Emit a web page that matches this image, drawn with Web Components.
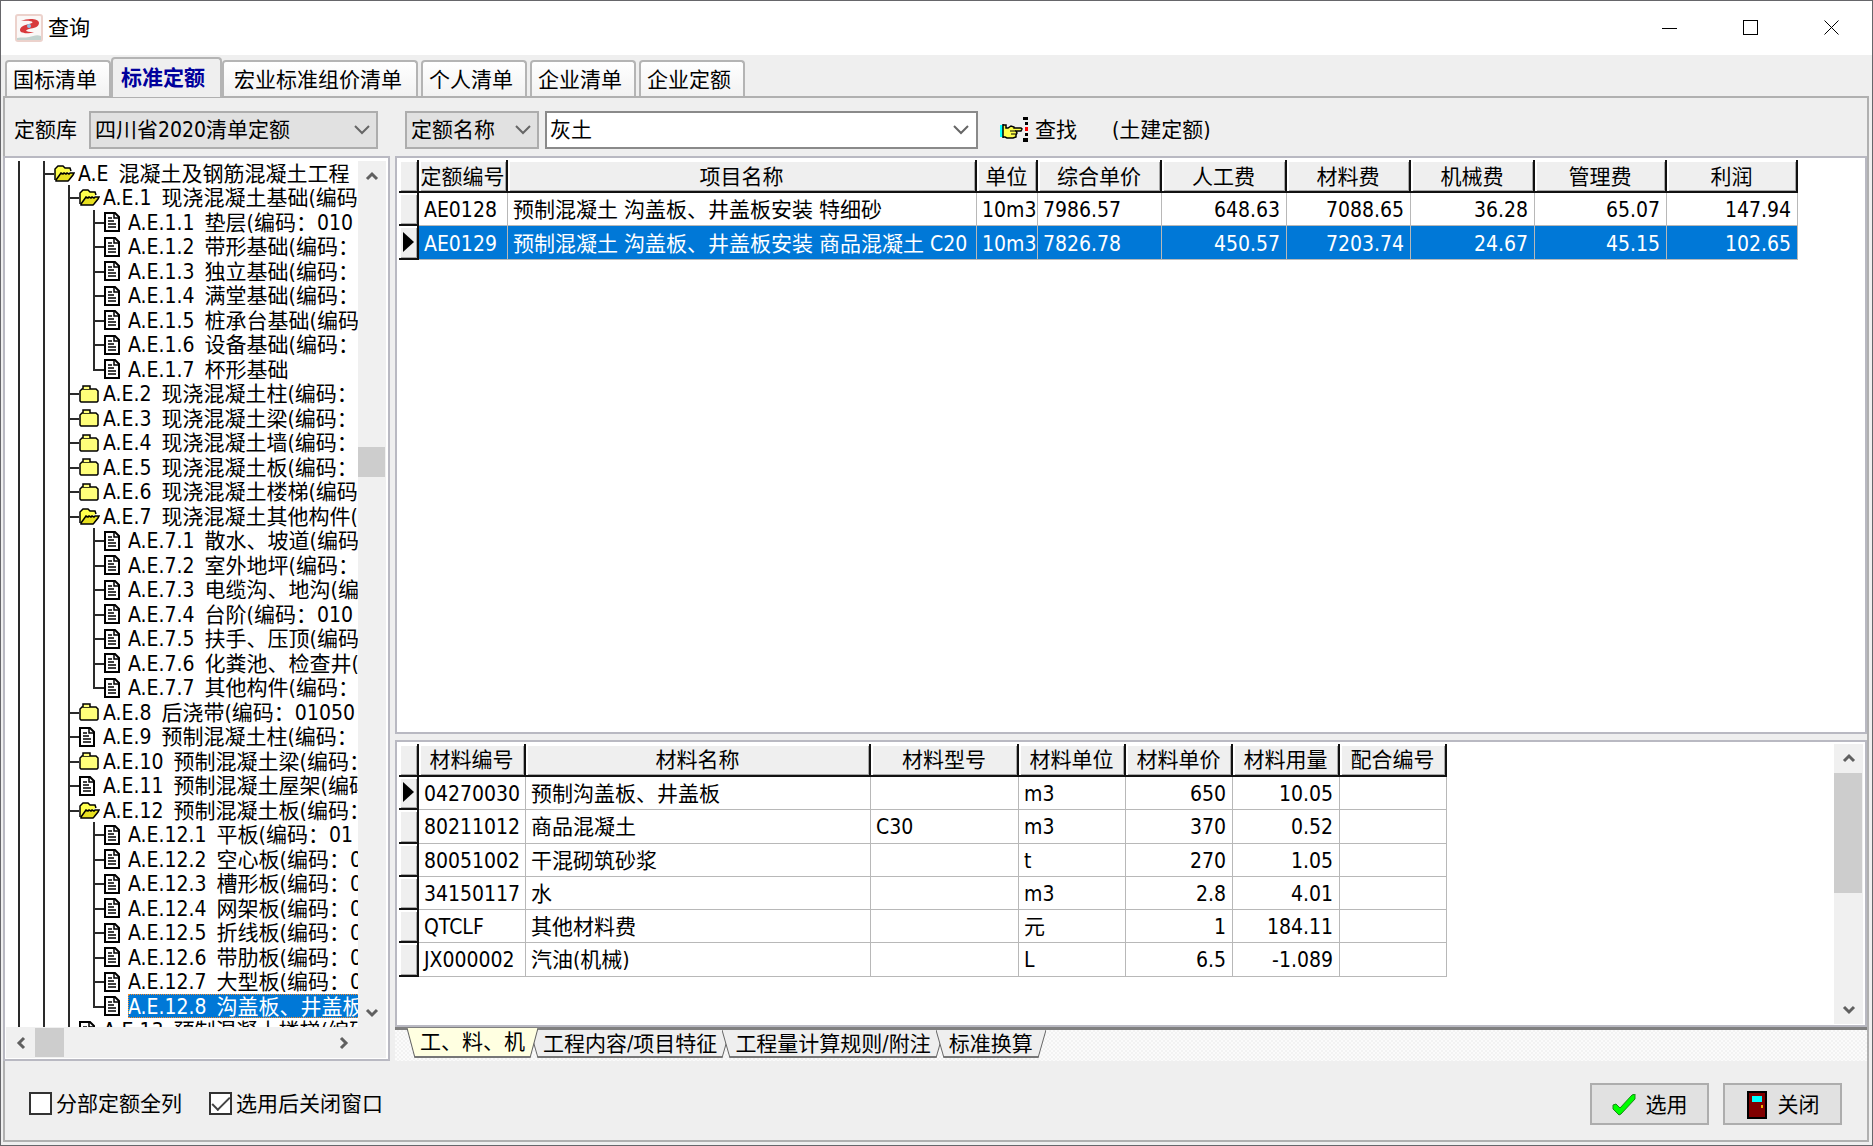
<!DOCTYPE html>
<html lang="zh-CN">
<head>
<meta charset="utf-8">
<title>查询</title>
<style>
  html, body { margin: 0; height: 100%; }
  body {
    font: 21px/24px "DejaVu Sans Condensed", "Noto Sans CJK SC", sans-serif;
    color: #000; background: #dcdcdc; overflow: hidden;
  }
</style>
</head>
<body>
<query-window></query-window>

<script>
const sheet = `
  *, *::before, *::after { box-sizing: border-box; }
  button, input, select { font: inherit; color: inherit; margin: 0; border-radius: 0; }
  svg { display: block; flex: none; }
`;
class Base extends HTMLElement {
  connectedCallback() {
    if (this.shadowRoot) return;
    const root = this.attachShadow({ mode: "open" });
    root.innerHTML = `<style>${sheet}${this.css()}</style>${this.html()}`;
  }
  css() { return ""; }
  html() { return "<slot></slot>"; }
}

/* ---------- title bar ---------- */
customElements.define("title-bar", class extends Base {
  css() { return `
    :host { display: flex; align-items: center; height: 54px; background: #fff; padding-left: 14px; }
    h1 { flex: 1; margin: 0 0 0 5px; font: inherit; }
    button { width: 81px; height: 54px; border: 0; padding: 0; background: none; display: grid; place-items: center; }
  `; }
  html() { return `
    <svg width="28" height="28" viewBox="0 0 28 28">
      <rect x="1" y="1" width="26" height="26" rx="2" fill="#fbf8f7" stroke="#ecd2cc" stroke-width="2"/>
      <path d="M2 24c5-1 8 0 12-1s8-3 12-1v4H2z" fill="#c3d3cf"/>
      <path d="M6 7C12 4 24 4 24 9c0 4-5 5-10 6-4 1-5 3 5 3-5 2-14 2-14-2 0-3 4-5 9-6 6-1 5-4-8-3z" fill="#d8393c"/>
      <circle cx="14" cy="12" r="2" fill="#8fc4ea"/>
    </svg>
    <h1><slot></slot></h1>
    <button aria-label="最小化"><svg width="16" height="16" shape-rendering="crispEdges"><path d="M0 8h15v1H0z"/></svg></button>
    <button aria-label="最大化"><svg width="16" height="16" fill="none" stroke="#000" shape-rendering="crispEdges"><path d="M.5.5h14v14H.5z"/></svg></button>
    <button aria-label="关闭窗口"><svg width="16" height="16" fill="none" stroke="#000"><path d="M.5.5l14 14M14.5.5l-14 14"/></svg></button>
  `; }
});

/* ---------- upper tabs ---------- */
customElements.define("tab-strip", class extends Base {
  css() { return `
    :host { display: flex; align-items: flex-end; height: 42px; padding-left: 4px; margin-bottom: -1px; position: relative; }
    button {
      height: 36px; width: 106px; padding: 0 0 0 6px; margin: 0 3px 1px 0; text-align: left; line-height: 36px;
      border: 2px solid #b4b4b4; border-bottom: 0; border-radius: 4px 4px 0 0;
      background: linear-gradient(#fff, #f2f2f2); white-space: nowrap;
    }
    button.near { margin-right: 0; }
    button.wide { width: 196px; padding-left: 10px; }
    button.on { height: 40px; width: 111px; margin: 0; padding-left: 8px; background: #efefef; color: #00009c; font-weight: bold; line-height: 38px; }
  `; }
  html() { return `
    <button class="near">国标清单</button><button class="on">标准定额</button><button class="wide">宏业标准组价清单</button><button>个人清单</button><button>企业清单</button><button>企业定额</button>
  `; }
});

/* ---------- drop-downs ---------- */
const chevron = `<svg class="chev" width="16" height="10" viewBox="0 0 16 10" fill="none" stroke="#666" stroke-width="2"><path d="M1 1l7 7 7-7"/></svg>`;
customElements.define("drop-down", class extends Base {
  css() { return `
    :host { display: grid; height: 38px; }
    select, .chev { grid-area: 1 / 1; }
    select { appearance: none; width: 100%; height: 100%; padding: 0 30px 0 4px; background: #e1e1e1; border: 2px solid #adadad; }
    .chev { justify-self: end; align-self: center; margin-right: 8px; pointer-events: none; }
  `; }
  html() { return `<select aria-label="${this.getAttribute("label")}"><option>${this.getAttribute("value")}</option></select>${chevron}`; }
});
customElements.define("combo-box", class extends Base {
  css() { return `
    :host { display: flex; height: 38px; background: #fff; border: 2px solid #8a8a8a; }
    input { flex: 1; min-width: 0; border: 0; padding: 0 3px; background: none; outline: 0; }
    button { width: 30px; border: 0; padding: 0; background: none; display: grid; place-items: center; }
  `; }
  html() { return `<input type="text" aria-label="${this.getAttribute("label")}" value="${this.getAttribute("value")}"><button aria-label="展开">${chevron}</button>`; }
});

/* ---------- toolbar ---------- */
customElements.define("query-toolbar", class extends Base {
  css() { return `
    :host { display: flex; align-items: center; height: 58px; padding: 6px 0 0 9px; }
    .lab { width: 75px; }
    .lib { width: 289px; margin-right: 27px; }
    .field { width: 134px; margin-right: 6px; }
    .term { width: 433px; margin-right: 22px; }
    .find { display: flex; align-items: center; gap: 6px; border: 0; background: none; padding: 0; margin-right: 35px; }
  `; }
  html() { return `
    <span class="lab">定额库</span>
    <drop-down class="lib" label="定额库" value="四川省2020清单定额"></drop-down>
    <drop-down class="field" label="查询字段" value="定额名称"></drop-down>
    <combo-box class="term" label="查询内容" value="灰土"></combo-box>
    <button class="find">
      <svg width="29" height="26" viewBox="0 0 29 26">
        <path d="M0 8h3v12H0z" fill="#0ff"/>
        <path d="M3 7v14M3 8h3v3h2l3-2 3 1v1h7l1 1-1 2h-5l1 2-1 2v2l-3 1H7l-2-1H3" fill="#ffff4d" stroke="#000" stroke-width="1.5"/>
        <path d="M10 14h6M11 17h5" stroke="#000" stroke-width="1" fill="none"/>
        <path d="M23 0h5v3h-5zM25 5h3v3h-3zM25 16h3v3h-3zM23 21h5v4h-5z"/>
        <path d="M25 10h3v4h-3z" fill="#f00"/>
      </svg>查找</button>
    <span>(土建定额)</span>
  `; }
});

/* ---------- scroll bar ---------- */
customElements.define("scroll-bar", class extends Base {
  css() {
    const [a, t, b] = this.getAttribute("parts").split(" ");
    return `
    :host { display: flex; flex-direction: column; background: #f0f0f0; flex: none; }
    :host([across]) { flex-direction: row; }
    button { flex: 0 0 29px; border: 0; padding: 0; background: none; display: grid; place-items: center; }
    .a { flex: ${a} 1 0px; } .t { flex: ${t} 1 0px; background: #cdcdcd; } .b { flex: ${b} 1 0px; }
    :host([across]) .t { margin: 1px 0; } :host(:not([across])) .t { margin-right: 1px; }
  `; }
  html() {
    const dirs = this.hasAttribute("across")
      ? ["M10 2L5 7l5 5", "M4 2l5 5-5 5"] : ["M2 10l5-5 5 5", "M2 4l5 5 5-5"];
    const arrow = (d, n) => `<button aria-label="${n}"><svg width="14" height="14" fill="none" stroke="#606060" stroke-width="3"><path d="${d}"/></svg></button>`;
    return `${arrow(dirs[0], "向前")}<i class="a"></i><i class="t"></i><i class="b"></i>${arrow(dirs[1], "向后")}`;
  }
});

/* ---------- tree ---------- */
const icons = {
  open: `<svg width="21" height="17" viewBox="0 0 21 17"><path d="M1 15V4l3-3h5l2 2h5l1 3" fill="#ffff4d" stroke="#000" stroke-width="1.5"/><path d="M2 15l5-7 2 1 1-1 2 1 1-1 2 1 1-1h4l-1 2-4 5-1 1H2z" fill="#e8e020" stroke="#000" stroke-width="1.5"/></svg>`,
  shut: `<svg width="21" height="18" viewBox="0 0 21 18"><path d="M1 16V6l2-2h14l2 2v10l-1 1H2z" fill="#ffff7a" stroke="#000" stroke-width="1.5"/><path d="M4 4V1h7v3" fill="#ffff7a" stroke="#000" stroke-width="1.5"/></svg>`,
  page: `<svg width="21" height="20" viewBox="0 0 21 20"><path d="M1 1h10l4 4v14H1z" fill="#fff" stroke="#000" stroke-width="2"/><path d="M10 1v5h5M4 6h4M4 9h6M4 12h8M4 15h8" fill="none" stroke="#000" stroke-width="1.5"/></svg>`
};
const nodes = [
  [1,"open","A.E 混凝土及钢筋混凝土工程"],
  [2,"open","A.E.1 现浇混凝土基础(编码"],
  [3,"page","A.E.1.1 垫层(编码：010"],
  [3,"page","A.E.1.2 带形基础(编码："],
  [3,"page","A.E.1.3 独立基础(编码："],
  [3,"page","A.E.1.4 满堂基础(编码："],
  [3,"page","A.E.1.5 桩承台基础(编码"],
  [3,"page","A.E.1.6 设备基础(编码："],
  [3,"page","A.E.1.7 杯形基础","last"],
  [2,"shut","A.E.2 现浇混凝土柱(编码："],
  [2,"shut","A.E.3 现浇混凝土梁(编码："],
  [2,"shut","A.E.4 现浇混凝土墙(编码："],
  [2,"shut","A.E.5 现浇混凝土板(编码："],
  [2,"shut","A.E.6 现浇混凝土楼梯(编码"],
  [2,"open","A.E.7 现浇混凝土其他构件("],
  [3,"page","A.E.7.1 散水、坡道(编码"],
  [3,"page","A.E.7.2 室外地坪(编码："],
  [3,"page","A.E.7.3 电缆沟、地沟(编"],
  [3,"page","A.E.7.4 台阶(编码：010"],
  [3,"page","A.E.7.5 扶手、压顶(编码"],
  [3,"page","A.E.7.6 化粪池、检查井("],
  [3,"page","A.E.7.7 其他构件(编码：","last"],
  [2,"shut","A.E.8 后浇带(编码：01050"],
  [2,"page","A.E.9 预制混凝土柱(编码："],
  [2,"shut","A.E.10 预制混凝土梁(编码："],
  [2,"page","A.E.11 预制混凝土屋架(编码"],
  [2,"open","A.E.12 预制混凝土板(编码："],
  [3,"page","A.E.12.1 平板(编码：01"],
  [3,"page","A.E.12.2 空心板(编码：0"],
  [3,"page","A.E.12.3 槽形板(编码：0"],
  [3,"page","A.E.12.4 网架板(编码：0"],
  [3,"page","A.E.12.5 折线板(编码：0"],
  [3,"page","A.E.12.6 带肋板(编码：0"],
  [3,"page","A.E.12.7 大型板(编码：0"],
  [3,"page","A.E.12.8 沟盖板、井盖板","last sel"],
  [2,"page","A.E.13 预制混凝土楼梯(编码"]
];
customElements.define("quota-tree", class extends Base {
  css() { return `
    :host { display: grid; grid-template: minmax(0, 1fr) 31px / minmax(0, 1fr) 28px; width: 387px; flex: none;
            background: #fff; border: 2px solid #b9b9c2; padding: 3px 2px 1px 1px; }
    ul { list-style: none; margin: 0; padding: 0 0 0 12px; overflow: hidden; min-height: 0; }
    li { display: flex; height: 24px; white-space: pre; }
    li:nth-child(even) { height: 25px; }
    .g { flex: 0 0 25px; border-left: 2px solid #2a2a2a; }
    .tee { flex: 0 0 11px; border-left: 2px solid #2a2a2a; background: linear-gradient(#2a2a2a, #2a2a2a) 0 12px / 9px 2px no-repeat; }
    .last .tee { border-left: 0; background: linear-gradient(#2a2a2a, #2a2a2a) 0 12px / 11px 2px no-repeat, linear-gradient(#2a2a2a, #2a2a2a) 0 0 / 2px 13px no-repeat; }
    li svg { align-self: center; margin-right: 3px; }
    .t { line-height: 24px; overflow: hidden; flex: 1 0 auto; padding-top: 1px; }
    .code { margin-right: 4px; }
    .sel .t { background: #0078d7; color: #fff; outline: 1px dotted #ff8c28; outline-offset: -1px; }
    .corner { background: #f0f0f0; }
  `; }
  html() {
    const row = ([lv, ic, text, cls = ""]) => {
      const [code, name] = text.split(" ");
      return `<li class="${cls}" role="treeitem">${'<span class="g"></span>'.repeat(lv)}<span class="tee"></span>${icons[ic]}<span class="t"><span class="code">${code} </span>${name}</span></li>`;
    };
    return `<ul role="tree">${nodes.map(row).join("")}</ul>
      <scroll-bar parts="257 30 521"></scroll-bar>
      <scroll-bar across parts="0 29 263"></scroll-bar><span class="corner"></span>`;
  }
});

/* ---------- grids ---------- */
const grids = {
  quota: {
    widths: [20, 89, 469, 61, 124, 125, 124, 124, 132, 131], nums: [5, 6, 7, 8, 9], current: 1, fill: true,
    head: ["定额编号", "项目名称", "单位", "综合单价", "人工费", "材料费", "机械费", "管理费", "利润"],
    rows: [
      ["AE0128", "预制混凝土 沟盖板、井盖板安装 特细砂", "10m3", "7986.57", "648.63", "7088.65", "36.28", "65.07", "147.94"],
      ["AE0129", "预制混凝土 沟盖板、井盖板安装 商品混凝土 C20", "10m3", "7826.78", "450.57", "7203.74", "24.67", "45.15", "102.65"]
    ]
  },
  material: {
    widths: [20, 107, 345, 148, 107, 107, 107, 107], nums: [5, 6], current: 0, fill: false,
    head: ["材料编号", "材料名称", "材料型号", "材料单位", "材料单价", "材料用量", "配合编号"],
    rows: [
      ["04270030", "预制沟盖板、井盖板", "", "m3", "650", "10.05", ""],
      ["80211012", "商品混凝土", "C30", "m3", "370", "0.52", ""],
      ["80051002", "干混砌筑砂浆", "", "t", "270", "1.05", ""],
      ["34150117", "水", "", "m3", "2.8", "4.01", ""],
      ["QTCLF", "其他材料费", "", "元", "1", "184.11", ""],
      ["JX000002", "汽油(机械)", "", "L", "6.5", "-1.089", ""]
    ]
  }
};
customElements.define("data-grid", class extends Base {
  css() { return `
    :host { display: flex; justify-content: space-between; background: #fff; border: 2px solid #b9b9c2; padding: 2px 2px 1px; min-height: 0; }
    table { border-collapse: separate; border-spacing: 0; table-layout: fixed; width: 0; height: 0; align-self: flex-start; }
    tr { height: 33px; } tr.tall { height: 34px; }
    th, td { font-weight: normal; padding: 2px 1px 0 5px; line-height: 24px; white-space: nowrap; overflow: hidden; }
    thead th { padding: 2px 0 0; background: #efefef; border-right: 2px solid #111; border-bottom: 2px solid #111;
               box-shadow: inset 2px 2px #fff, inset -1px -1px #a8a8a8; text-align: center; }
    td { border-right: 1px solid #b8b8b8; border-bottom: 1px solid #b8b8b8; }
    td.n { text-align: right; padding-right: 6px; }
    tbody th { background: #efefef; border-right: 2px solid #111; border-bottom: 2px solid #111; padding: 0;
               box-shadow: inset 2px 2px #fff, inset -1px -1px #a8a8a8; }
    tbody th svg { margin: 0 auto; }
    .fill td { background: #0078d7; color: #fff; }
  `; }
  html() {
    const g = grids[this.getAttribute("data")];
    const mark = `<svg width="12" height="20"><path d="M1 0l11 10-11 10z"/></svg>`;
    return `<table>
      <colgroup>${g.widths.map(w => `<col style="width:${w}px">`).join("")}</colgroup>
      <thead><tr><th></th>${g.head.map(h => `<th scope="col">${h}</th>`).join("")}</tr></thead>
      <tbody>${g.rows.map((r, i) => `<tr class="${i % 4 === 1 ? "tall" : ""} ${g.fill && i === g.current ? "fill" : ""}">
        <th>${i === g.current ? mark : ""}</th>${r.map((c, k) => `<td class="${g.nums.includes(k + 1) ? "n" : ""}">${c}</td>`).join("")}</tr>`).join("")}</tbody>
    </table><slot></slot>`;
  }
});

/* ---------- lower sheet tabs ---------- */
customElements.define("sheet-tabs", class extends Base {
  css() { return `
    :host { display: flex; flex: none; height: 34px; padding-left: 12px; border-top: 3px solid #808080;
            background: repeating-conic-gradient(#f2f2f2 0 25%, #fbfbfb 0 50%) 0 0 / 4px 4px; }
    button { display: flex; height: 28px; border: 0; padding: 0; margin-right: -8px; background: none; position: relative; --f: #efefef; }
    button.on { --f: #ffffe1; z-index: 1; height: 30px; margin-top: -2px; }
    button svg { height: 100%; }
    span { display: block; height: 100%; padding: 0 5px; line-height: 28px; background: var(--f); border-bottom: 2px solid #777; white-space: nowrap; }
    path { stroke: #666; stroke-width: 1; } polygon { fill: var(--f); }
  `; }
  html() {
    const tab = (t, c = "") => `<button class="${c}">
      <svg width="8" viewBox="0 0 8 28" preserveAspectRatio="none"><polygon points="0,0 8,0 8,28"/><path d="M0 0l8 28"/></svg><span>${t}</span><svg width="8" viewBox="0 0 8 28" preserveAspectRatio="none"><polygon points="0,0 8,0 0,28"/><path d="M8 0l-8 28"/></svg></button>`;
    return tab("工、料、机", "on") + tab("工程内容/项目特征") + tab("工程量计算规则/附注") + tab("标准换算");
  }
});

/* ---------- footer ---------- */
customElements.define("check-item", class extends Base {
  css() { return `
    :host { display: block; }
    label { display: flex; align-items: center; gap: 4px; }
    input { appearance: none; width: 23px; height: 23px; border: 2px solid #333; background: #fff; display: grid; place-items: center; }
    input:checked::before { content: ""; width: 18px; height: 9px; border: solid #444; border-width: 0 0 2px 2px; transform: translateY(-2px) rotate(-45deg); }
  `; }
  html() { return `<label><input type="checkbox" ${this.hasAttribute("checked") ? "checked" : ""}><span><slot></slot></span></label>`; }
});
customElements.define("push-button", class extends Base {
  css() { return `
    :host { display: block; }
    button { display: flex; align-items: center; justify-content: center; gap: 10px; width: 119px; height: 42px; padding: 2px 0 0; background: #e1e1e1; border: 2px solid #adadad; }
  `; }
  html() { return `<button><slot name="icon"></slot><slot></slot></button>`; }
});
customElements.define("window-footer", class extends Base {
  css() { return `
    :host { display: flex; align-items: center; height: 79px; padding: 6px 25px 0 24px; }
    .gap { flex: 1; }
    check-item { margin-right: 27px; }
    push-button + push-button { margin-left: 14px; }
  `; }
  html() { return `
    <check-item>分部定额全列</check-item>
    <check-item checked>选用后关闭窗口</check-item>
    <span class="gap"></span>
    <push-button><svg slot="icon" width="24" height="22" viewBox="0 0 24 22"><path d="M1 11l3-1 4 4L20 1l3-1v5L9 20l-2 1-6-6z" fill="#0f0" stroke="#168a16" stroke-width="1"/></svg>选用</push-button>
    <push-button><svg slot="icon" width="22" height="28" viewBox="0 0 22 28"><rect x="2" y="1" width="18" height="26" fill="#800000" stroke="#000" stroke-width="2"/><path d="M6 5h10v6H6z" fill="#0ff"/><path d="M15 14h2v3h-2z" fill="#f0b000"/></svg>关闭</push-button>
  `; }
});

/* ---------- window ---------- */
customElements.define("query-window", class extends Base {
  css() { return `
    :host { display: flex; flex-direction: column; height: 100vh; border: 1px solid #66666a; background: #efefef; box-sizing: border-box; }
    .page { flex: 1; min-height: 0; display: flex; flex-direction: column; margin: 0 3px 3px 2px;
            border: 2px solid #b0b0b0; }
    .main { flex: 1; min-height: 0; display: flex; gap: 5px; margin-left: -2px; }
    .right { flex: 1; min-width: 0; display: flex; flex-direction: column; }
    .upper { flex: 580 1 0px; margin-bottom: 6px; }
    .lower { flex: 285 1 0px; }
    .lower scroll-bar { width: 29px; }
  `; }
  html() { return `
    <title-bar>查询</title-bar>
    <tab-strip></tab-strip>
    <div class="page">
      <query-toolbar></query-toolbar>
      <div class="main">
        <quota-tree></quota-tree>
        <div class="right">
          <data-grid class="upper" data="quota"></data-grid>
          <data-grid class="lower" data="material"><scroll-bar parts="0 121 102"></scroll-bar></data-grid>
          <sheet-tabs></sheet-tabs>
        </div>
      </div>
      <window-footer></window-footer>
    </div>
  `; }
});
</script>
</body>
</html>
